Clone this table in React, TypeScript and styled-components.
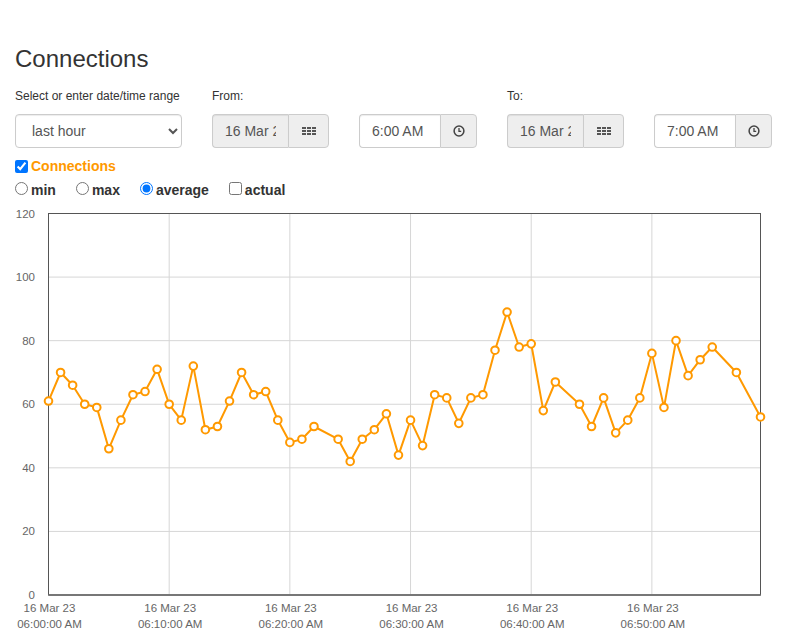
import React from 'react'
import styled, { createGlobalStyle } from 'styled-components'

const GlobalStyle = createGlobalStyle`
  html, body {
    margin: 0;
    padding: 0;
    background: #fff;
    font-family: 'Liberation Sans', Arial, Helvetica, sans-serif;
    color: #333;
  }
  * { box-sizing: border-box; }
`

const Page = styled.div`
  width: 787px;
  height: 634px;
  overflow: hidden;
`

const Header = styled.div`
  padding: 0 15px;
`

const Title = styled.h2`
  font-size: 24px;
  font-weight: normal;
  line-height: 1.1;
  margin: 46px 0 15.6px;
  color: #333;
`

const Controls = styled.div`
  display: flex;
  gap: 30px;
`

const Field = styled.div`
  display: flex;
  flex-direction: column;
`

const FieldLabel = styled.label`
  font-size: 12px;
  line-height: 17px;
  height: 17px;
  margin-bottom: 9px;
  color: #333;
`

const RangeSelect = styled.select`
  width: 167px;
  height: 34px;
  padding: 6px 12px;
  font-family: inherit;
  font-size: 14px;
  color: #555;
  background: #fff;
  border: 1px solid #ccc;
  border-radius: 4px;
  box-shadow: inset 0 1px 1px rgba(0, 0, 0, 0.075);
`

const InputGroup = styled.div`
  display: flex;
  height: 34px;
`

const GroupInput = styled.input<{ $width: number; $muted?: boolean }>`
  width: ${p => p.$width}px;
  height: 34px;
  padding: 6px 12px;
  font-family: inherit;
  font-size: 14px;
  color: #555;
  background: ${p => (p.$muted ? '#eee' : '#fff')};
  border: 1px solid #ccc;
  border-right: none;
  border-radius: 4px 0 0 4px;
  box-shadow: inset 0 1px 1px rgba(0, 0, 0, 0.075);
  outline: none;
`

const Addon = styled.span<{ $width: number }>`
  width: ${p => p.$width}px;
  height: 34px;
  display: flex;
  align-items: center;
  justify-content: center;
  background: #eee;
  border: 1px solid #ccc;
  border-radius: 0 4px 4px 0;
  color: #555;
`

const SeriesRow = styled.div`
  display: flex;
  align-items: center;
  height: 20px;
  margin-top: 8px;
`

const SeriesCheck = styled.input`
  width: 13px;
  height: 13px;
  margin: 1px 3px 0 0;
`

const SeriesName = styled.span`
  font-size: 14px;
  font-weight: bold;
  color: #ff9900;
`

const OptionsRow = styled.div`
  display: flex;
  align-items: center;
  gap: 20px;
  height: 20px;
  margin-top: 4px;
`

const Option = styled.label`
  display: flex;
  align-items: center;
  font-size: 14px;
  font-weight: bold;
  color: #333;

  input {
    width: 13px;
    height: 13px;
    margin: 0 3px 3px 0;
  }
`

const ChartSvg = styled.svg`
  display: block;
  font-family: 'Liberation Sans', Arial, sans-serif;
`

const GridIcon = () => (
  <svg width="14" height="8" viewBox="0 0 14 8">
    {[0, 5, 10].map(x =>
      [0, 3, 6].map(y => <rect key={`${x}-${y}`} x={x} y={y} width="4" height="2" fill="#555" />)
    )}
  </svg>
)

const ClockIcon = () => (
  <svg width="12" height="12" viewBox="0 0 12 12">
    <circle cx="6" cy="6" r="4.9" fill="none" stroke="#444" strokeWidth="1.5" />
    <path d="M6 3 V6.4 H8.2" fill="none" stroke="#444" strokeWidth="1.3" />
  </svg>
)

// minute -> average connections
const data: [number, number][] = [
  [0, 61], [1, 70], [2, 66], [3, 60], [4, 59], [5, 46], [6, 55], [7, 63], [8, 64], [9, 71],
  [10, 60], [11, 55], [12, 72], [13, 52], [14, 53], [15, 61], [16, 70], [17, 63], [18, 64], [19, 55],
  [20, 48], [21, 49], [22, 53], [24, 49], [25, 42], [26, 49], [27, 52], [28, 57], [29, 44],
  [30, 55], [31, 47], [32, 63], [33, 62], [34, 54], [35, 62], [36, 63], [37, 77], [38, 89], [39, 78],
  [40, 79], [41, 58], [42, 67], [44, 60], [45, 53], [46, 62], [47, 51], [48, 55], [49, 62],
  [50, 76], [51, 59], [52, 80], [53, 69], [54, 74], [55, 78], [57, 70], [59, 56],
]

const PLOT = { left: 48.5, right: 760.5, top: 13.5, bottom: 395 }
const xOf = (m: number) => PLOT.left + (m / 59) * (PLOT.right - PLOT.left)
const yOf = (v: number) => PLOT.bottom - (v / 120) * (PLOT.bottom - PLOT.top)

const ConnectionsChart = () => {
  const yTicks = [0, 20, 40, 60, 80, 100, 120]
  const xTicks = [0, 10, 20, 30, 40, 50]
  const line = data.map(([m, v], i) => `${i ? 'L' : 'M'}${xOf(m).toFixed(1)} ${yOf(v).toFixed(1)}`).join(' ')

  return (
    <ChartSvg width="787" height="434" viewBox="0 0 787 434">
      {yTicks.map(v => (
        <g key={v}>
          <line x1={PLOT.left} x2={PLOT.right} y1={yOf(v)} y2={yOf(v)} stroke="#d6d6d6" strokeWidth="1" />
          <text x="35" y={yOf(v) + 4} fontSize="11.5" fill="#666" textAnchor="end">{v}</text>
        </g>
      ))}
      {xTicks.map(m => (
        <g key={m}>
          <line x1={xOf(m)} x2={xOf(m)} y1={PLOT.top} y2={PLOT.bottom} stroke="#d6d6d6" strokeWidth="1" />
          <text x={xOf(m) + 1} y="411.7" fontSize="11.5" fill="#666" textAnchor="middle">16 Mar 23</text>
          <text x={xOf(m) + 1} y="427.7" fontSize="11.5" fill="#666" textAnchor="middle">
            {`06:${String(m).padStart(2, '0')}:00 AM`}
          </text>
        </g>
      ))}
      <rect
        x={PLOT.left}
        y={PLOT.top}
        width={PLOT.right - PLOT.left}
        height={PLOT.bottom - PLOT.top}
        fill="none"
        stroke="#555"
        strokeWidth="1"
      />
      <line x1={PLOT.left} x2={PLOT.right} y1={PLOT.bottom} y2={PLOT.bottom} stroke="#777" strokeWidth="2" />
      <path d={line} fill="none" stroke="#ff9900" strokeWidth="2" strokeLinejoin="round" />
      {data.map(([m, v]) => (
        <circle key={m} cx={xOf(m)} cy={yOf(v)} r="3.8" fill="#fff" stroke="#ff9900" strokeWidth="2" />
      ))}
    </ChartSvg>
  )
}

export default function App() {
  return (
    <Page>
      <GlobalStyle />
      <Header>
        <Title>Connections</Title>
        <Controls>
          <Field>
            <FieldLabel>Select or enter date/time range</FieldLabel>
            <RangeSelect defaultValue="last hour">
              <option value="last hour">last hour</option>
              <option value="last day">last day</option>
              <option value="last week">last week</option>
            </RangeSelect>
          </Field>
          <Field>
            <FieldLabel>From:</FieldLabel>
            <InputGroup>
              <GroupInput $width={76} $muted readOnly value="16 Mar 23" />
              <Addon $width={41}><GridIcon /></Addon>
            </InputGroup>
          </Field>
          <Field>
            <FieldLabel />
            <InputGroup>
              <GroupInput $width={81} readOnly value="6:00 AM" />
              <Addon $width={37}><ClockIcon /></Addon>
            </InputGroup>
          </Field>
          <Field>
            <FieldLabel>To:</FieldLabel>
            <InputGroup>
              <GroupInput $width={76} $muted readOnly value="16 Mar 23" />
              <Addon $width={41}><GridIcon /></Addon>
            </InputGroup>
          </Field>
          <Field>
            <FieldLabel />
            <InputGroup>
              <GroupInput $width={81} readOnly value="7:00 AM" />
              <Addon $width={37}><ClockIcon /></Addon>
            </InputGroup>
          </Field>
        </Controls>
        <SeriesRow>
          <SeriesCheck type="checkbox" defaultChecked />
          <SeriesName>Connections</SeriesName>
        </SeriesRow>
        <OptionsRow>
          <Option><input type="radio" name="agg" />min</Option>
          <Option><input type="radio" name="agg" />max</Option>
          <Option><input type="radio" name="agg" defaultChecked />average</Option>
          <Option><input type="checkbox" />actual</Option>
        </OptionsRow>
      </Header>
      <ConnectionsChart />
    </Page>
  )
}
